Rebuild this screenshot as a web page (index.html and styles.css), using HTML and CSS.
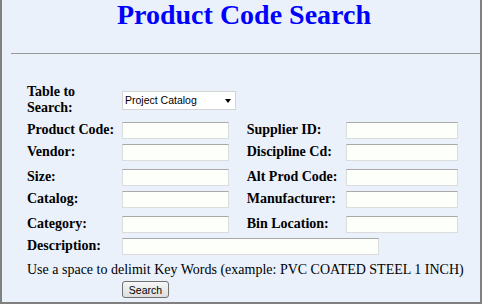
FILE: index.html
```html
<!DOCTYPE html>
<html lang="en">
<head>
  <meta charset="UTF-8">
  <title>Product Code Search</title>
  <link rel="stylesheet" href="styles.css">
</head>
<body>
  <div class="page">
    <h1>Product Code Search</h1>
    <hr>
    <form id="productSearch">
      <table class="search-table">
        <tr class="row-table">
          <td class="label">Table to<br>Search:</td>
          <td colspan="3">
            <span class="select-wrap">
              <select name="table">
                <option>Project Catalog</option>
                <option>Master Catalog</option>
              </select>
            </span>
          </td>
        </tr>
        <tr>
          <td class="label">Product Code:</td>
          <td><input type="text" name="productCode"></td>
          <td class="label label-right">Supplier ID:</td>
          <td><input type="text" name="supplierId" class="wide"></td>
        </tr>
        <tr>
          <td class="label">Vendor:</td>
          <td><input type="text" name="vendor"></td>
          <td class="label label-right">Discipline Cd:</td>
          <td><input type="text" name="discipline" class="wide"></td>
        </tr>
        <tr class="row-tall">
          <td class="label">Size:</td>
          <td><input type="text" name="size"></td>
          <td class="label label-right">Alt Prod Code:</td>
          <td><input type="text" name="altCode" class="wide"></td>
        </tr>
        <tr>
          <td class="label">Catalog:</td>
          <td><input type="text" name="catalog"></td>
          <td class="label label-right">Manufacturer:</td>
          <td><input type="text" name="manufacturer" class="wide"></td>
        </tr>
        <tr class="row-tall">
          <td class="label">Category:</td>
          <td><input type="text" name="category"></td>
          <td class="label label-right">Bin Location:</td>
          <td><input type="text" name="bin" class="wide"></td>
        </tr>
        <tr>
          <td class="label">Description:</td>
          <td colspan="3"><input type="text" name="description" class="desc"></td>
        </tr>
        <tr class="row-note">
          <td colspan="4">Use a space to delimit Key Words (example: PVC COATED STEEL 1 INCH)</td>
        </tr>
        <tr class="row-button">
          <td></td>
          <td colspan="3"><button type="submit">Search</button></td>
        </tr>
      </table>
    </form>
  </div>
</body>
</html>
```

FILE: styles.css
```css
html, body {
  margin: 0;
  padding: 0;
}
body {
  font-family: "Liberation Serif", "Times New Roman", serif;
  background: #eaf1fb;
}
.page {
  box-sizing: border-box;
  width: 482px;
  height: 304px;
  border: 2px solid #808080;
  border-top: none;
  overflow: hidden;
}
h1 {
  color: #0000ff;
  font-size: 28px;
  line-height: 32px;
  text-align: center;
  margin: -1px 0 0 0;
  padding-left: 6px;
}
hr {
  height: 0;
  margin: 22px 0 0 9px;
  border: none;
  border-top: 1px solid #9a9a9a;
}
.search-table {
  margin: 30px 0 0 23px;
  border-collapse: collapse;
}
.search-table td {
  padding: 0 2px;
  height: 22px;
  font-size: 14px;
  line-height: 16px;
  vertical-align: middle;
}
.search-table .label {
  font-weight: bold;
  width: 91px;
}
.search-table .label-right {
  padding-left: 10px;
  width: 95px;
}
.row-table td {
  padding-bottom: 3px;
}
.search-table .row-tall td {
  padding-top: 3px;
}
.search-table .row-note td {
  height: 20px;
  padding-top: 3px;
}
.search-table .row-button td {
  height: 17px;
  padding-top: 1px;
  vertical-align: top;
}
input[type="text"] {
  box-sizing: border-box;
  width: 107px;
  height: 17px;
  border: 1px solid #dcdcdc;
  border-top-color: #a9a9a9;
  background: #fdfffb;
  margin: 0;
  padding: 0;
  vertical-align: middle;
}
input.wide {
  width: 112px;
}
input.desc {
  width: 257px;
}
.select-wrap {
  position: relative;
  display: inline-block;
  vertical-align: middle;
}
.select-wrap::after {
  content: "";
  position: absolute;
  right: 5px;
  top: 8px;
  border-left: 3.5px solid transparent;
  border-right: 3.5px solid transparent;
  border-top: 4px solid #000;
  pointer-events: none;
}
select {
  appearance: none;
  -webkit-appearance: none;
  box-sizing: border-box;
  width: 114px;
  height: 19px;
  margin: 0;
  padding: 0 0 0 2px;
  font-family: "Liberation Sans", Arial, sans-serif;
  font-size: 10.5px;
  color: #000;
  border: 1px solid #d4d4d4;
  border-radius: 0;
  background: #fff;
}
button {
  box-sizing: border-box;
  width: 47px;
  height: 17px;
  margin: 0;
  padding: 0;
  font-family: "Liberation Sans", Arial, sans-serif;
  font-size: 10.5px;
  color: #000;
  border: 1px solid #707070;
  border-radius: 3px;
  background: linear-gradient(#f6f6f6, #dedede);
}
```
